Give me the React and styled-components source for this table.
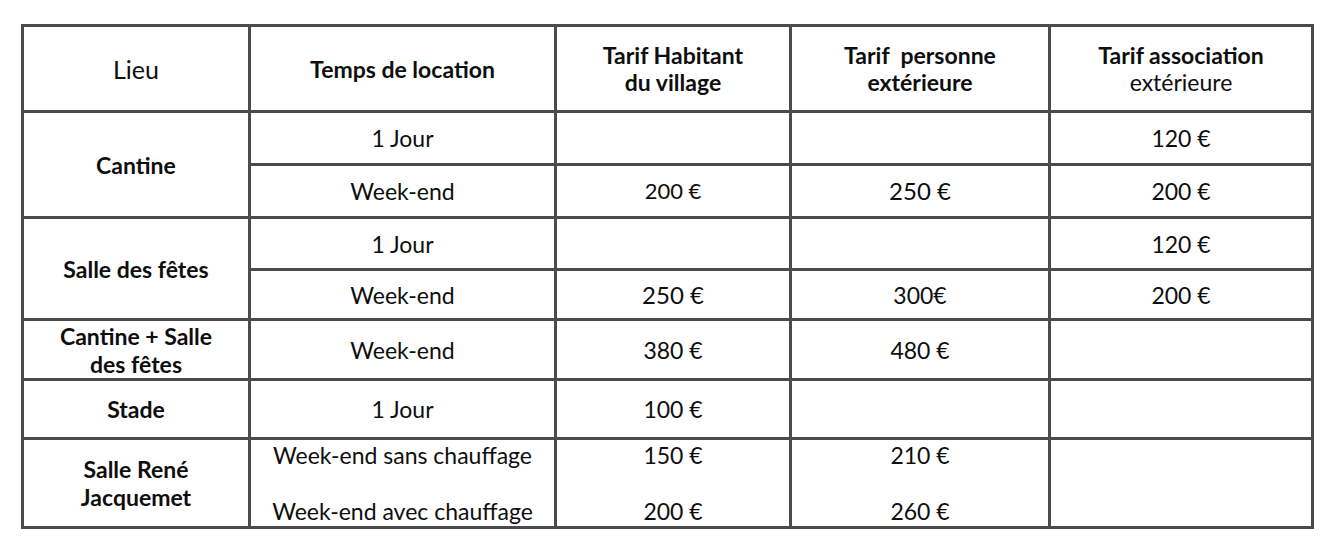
import * as React from 'react';
import styled, { createGlobalStyle } from 'styled-components';

const GlobalStyle = createGlobalStyle`
    body {
        margin: 0;
        background: #fff;
        font-family: Lato, "Open Sans", "Liberation Sans", sans-serif;
        color: #0e0e0e;
    }
`

const StyledPage = styled.div`
    padding: 24px 0 0 21px;
    width: 1340px;
    height: 555px;
    box-sizing: border-box;
`

// the dark background shows through the gaps and draws the rules
const StyledTable = styled.div`
    display: inline-grid;
    grid-template-columns: 224px 303px 232px 256px 260px;
    grid-template-rows: 83px 50px 50px 49px 47px 57px 56px 86px;
    gap: 3px;
    padding: 3px;
    background: #4b4b4b;
`

const StyledCell = styled.div`
    background: #fff;
    display: flex;
    flex-direction: column;
    align-items: center;
    justify-content: center;
    text-align: center;
    font-size: ${({ $size }) => $size || 23}px;
    font-weight: ${({ $bold }) => ($bold ? 700 : 400)};
    line-height: ${({ $lh }) => $lh || 28}px;
    grid-row: ${({ $span }) => ($span ? `span ${$span}` : 'auto')};
    white-space: nowrap;

    .regular {
        font-weight: 400;
    }
`

const StyledGap = styled.span`
    display: block;
    height: 28px;
`

const rows = [
    { place: 'Cantine', span: 2, cells: [['1 Jour'], [''], [''], ['120 €']] },
    { cells: [['Week-end'], ['200 €', 22], ['250 €', 24], ['200 €']] },
    { place: 'Salle des fêtes', span: 2, cells: [['1 Jour'], [''], [''], ['120 €']] },
    { cells: [['Week-end'], ['250 €', 24], ['300€'], ['200 €']] },
    { place: ['Cantine + Salle', 'des fêtes'], cells: [['Week-end'], ['380 €'], ['480 €'], ['']] },
    { place: 'Stade', cells: [['1 Jour'], ['100 €'], [''], ['']] },
    {
        place: ['Salle René', 'Jacquemet'],
        cells: [
            [['Week-end sans chauffage', 'Week-end avec chauffage']],
            [['150 €', '200 €']],
            [['210 €', '260 €']],
            [''],
        ],
    },
];

const Lines = ({ text }) => {
    if (!Array.isArray(text)) return text;
    return text.map((t, i) => <span key={i}>{t}</span>);
};

const Stacked = ({ pair }) => (
    <>
        <span>{pair[0]}</span>
        <StyledGap />
        <span>{pair[1]}</span>
    </>
);

const App = () => {
    return (
        <>
            <GlobalStyle />
            <StyledPage>
                <StyledTable>
                    <StyledCell $size={25}>Lieu</StyledCell>
                    <StyledCell $bold>Temps de location</StyledCell>
                    <StyledCell $bold $lh={27}>
                        <span>Tarif Habitant</span>
                        <span>du village</span>
                    </StyledCell>
                    <StyledCell $bold $lh={27}>
                        <span>Tarif&nbsp; personne</span>
                        <span>extérieure</span>
                    </StyledCell>
                    <StyledCell $bold $lh={27}>
                        <span>Tarif association</span>
                        <span className='regular'>extérieure</span>
                    </StyledCell>

                    {rows.map(({ place, span, cells }, i) => (
                        <React.Fragment key={i}>
                            {place && (
                                <StyledCell $bold $span={span}>
                                    <Lines text={place} />
                                </StyledCell>
                            )}
                            {cells.map(([value, size], j) => (
                                <StyledCell key={j} $size={size}>
                                    {Array.isArray(value) ? <Stacked pair={value} /> : value}
                                </StyledCell>
                            ))}
                        </React.Fragment>
                    ))}
                </StyledTable>
            </StyledPage>
        </>
    )
};

export default App;
